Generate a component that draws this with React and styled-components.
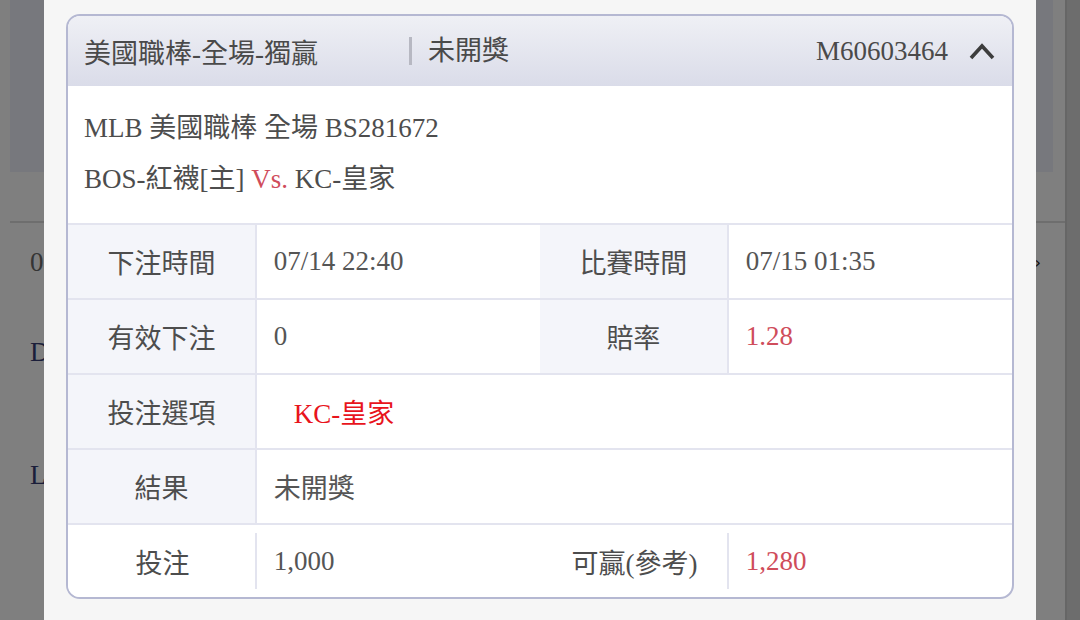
import React from "react";
import styled, { createGlobalStyle, css } from "styled-components";

const GlobalStyle = createGlobalStyle`
  html, body { margin: 0; padding: 0; width: 1080px; height: 620px; overflow: hidden; }
  body { font-family: "Liberation Serif", "Noto Sans CJK TC", serif; background: #fff; }
  * { box-sizing: border-box; }
`;

/* ---------- page behind the dialog ---------- */
const BgPage = styled.div`
  display: flex;
  width: 1080px;
  height: 620px;
  background: #fff;
`;
const BgMain = styled.div`
  flex: 1;
  display: flex;
  flex-direction: column;
  padding-left: 10px;
`;
const BgTop = styled.div`
  height: 172px;
  background: #eef0fb;
  margin-right: 12px;
`;
const BgHead = styled.div`
  height: 51px;
  border-bottom: 2px solid #dcdcdc;
`;
const BgRow = styled.div`
  height: ${(p) => p.$h}px;
  display: flex;
  align-items: center;
  justify-content: space-between;
  padding: 0 24px 0 20px;
  font-size: 27px;
  color: ${(p) => p.$color || "#6a6a6a"};
`;
const BgArrow = styled.span`
  font-family: "DejaVu Sans", sans-serif;
  font-size: 16px;
  color: #222;
`;
const Scroll = styled.div`
  width: 15px;
  background: #dadada;
  border-left: 2px solid #cdcdcd;
`;

/* ---------- overlay + dialog ---------- */
const Overlay = styled.div`
  position: fixed;
  inset: 0;
  background: rgba(0, 0, 0, 0.5);
`;
const Modal = styled.div`
  position: fixed;
  top: 0;
  bottom: 0;
  left: 44px;
  width: 992px;
  background: #f6f6f6;
  padding: 14px 22px;
`;
const Card = styled.div`
  border: 2px solid #b5b8d2;
  border-radius: 14px;
  overflow: hidden;
  background: #fff;
  font-size: 27px;
  color: #4d4d4d;
`;
const Header = styled.div`
  height: 70px;
  display: flex;
  align-items: center;
  padding: 0 16px;
  background: linear-gradient(#eff0f5, #dadce9);
  color: #4a4a4a;
`;
const Title = styled.div`
  flex: 0 0 325px;
`;
const Status = styled.div`
  border-left: 3px solid #b7b8c2;
  padding-left: 16px;
  line-height: 28px;
`;
const Code = styled.div`
  margin-left: auto;
`;
const Chevron = styled.svg`
  margin-left: 20px;
  display: block;
`;
const Info = styled.div`
  padding: 17px 16px 18px;
  line-height: 51px;
`;
const Vs = styled.span`
  color: #d04c5b;
`;
const Table = styled.div`
  display: grid;
  grid-template-columns: 20% 30% 20% 30%;
`;
const Cell = styled.div`
  height: 75px;
  border-top: 2px solid #e3e4ef;
  display: flex;
  align-items: center;
`;
const Label = styled(Cell)`
  justify-content: center;
  color: #4d4d4d;
  ${(p) =>
    p.$plain
      ? css`
          position: relative;
          background: #fff;
          height: 74px;
          &::after {
            content: "";
            position: absolute;
            right: 0;
            top: 8px;
            bottom: 8px;
            width: 2px;
            background: #e3e4ef;
          }
        `
      : css`
          background: #f4f5fa;
          border-right: 2px solid #e3e4ef;
        `}
`;
const tones = {
  normal: "#555",
  odds: "#cf4d5b",
  pick: "#e8141c",
};
const Value = styled(Cell)`
  padding-left: ${(p) => (p.$indent ? 37 : 17)}px;
  color: ${(p) => tones[p.$tone || "normal"]};
  ${(p) => p.$wide && "grid-column: span 3;"}
  ${(p) => p.$plain && "height: 74px;"}
`;

export default function App() {
  return (
    <>
      <GlobalStyle />
      <BgPage>
        <BgMain>
          <BgTop />
          <BgHead />
          <BgRow $h={78}>
            <span>0</span>
            <BgArrow>›</BgArrow>
          </BgRow>
          <BgRow $h={102} $color="#363c74">
            <span>DET</span>
          </BgRow>
          <BgRow $h={144} $color="#363c74">
            <span>LAD</span>
          </BgRow>
        </BgMain>
        <Scroll />
      </BgPage>
      <Overlay />
      <Modal>
        <Card>
          <Header>
            <Title>美國職棒-全場-獨贏</Title>
            <Status>未開獎</Status>
            <Code>M60603464</Code>
            <Chevron width="28" height="20" viewBox="0 0 28 20">
              <polyline
                points="3,17 14,5 25,17"
                fill="none"
                stroke="#3d3d3d"
                strokeWidth="3.6"
                strokeLinejoin="miter"
              />
            </Chevron>
          </Header>
          <Info>
            <div>MLB 美國職棒 全場 BS281672</div>
            <div>
              BOS-紅襪[主] <Vs>Vs.</Vs> KC-皇家
            </div>
          </Info>
          <Table>
            <Label>下注時間</Label>
            <Value>07/14 22:40</Value>
            <Label>比賽時間</Label>
            <Value>07/15 01:35</Value>

            <Label>有效下注</Label>
            <Value>0</Value>
            <Label>賠率</Label>
            <Value $tone="odds">1.28</Value>

            <Label>投注選項</Label>
            <Value $wide $indent $tone="pick">KC-皇家</Value>

            <Label>結果</Label>
            <Value $wide>未開獎</Value>

            <Label $plain>投注</Label>
            <Value $plain>1,000</Value>
            <Label $plain>可贏(參考)</Label>
            <Value $plain $tone="odds">1,280</Value>
          </Table>
        </Card>
      </Modal>
    </>
  );
}
